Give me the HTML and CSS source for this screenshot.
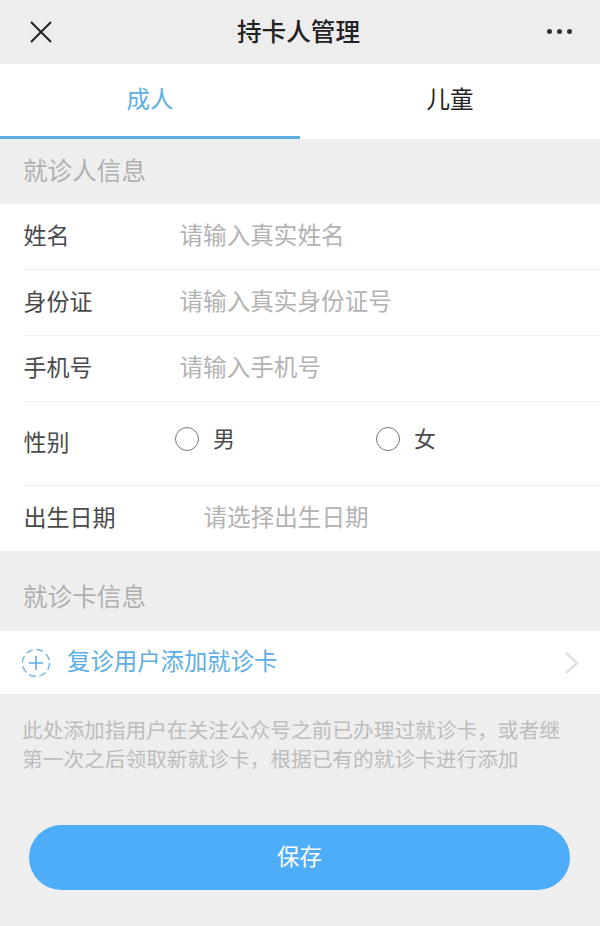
FILE: index.html
```html
<!DOCTYPE html>
<html lang="zh-CN">
<head>
    <meta charset="UTF-8">
    <meta name="viewport" content="width=device-width, initial-scale=1.0">
    <title>持卡人管理</title>

    <link rel="stylesheet" href="styles.css">
</head>
<body>

    <div class="header">
        <svg class="close" width="24" height="24" viewBox="0 0 24 24">
            <path d="M2 2 L22 22 M22 2 L2 22" fill="none" stroke="#222" stroke-width="2"/>
        </svg>
        <h1>持卡人管理</h1>
        <div class="more"><span></span><span></span><span></span></div>
    </div>

    <div class="tabs">
        <div class="tab active">成人</div>
        <div class="tab">儿童</div>
    </div>

    <div class="section">就诊人信息</div>

    <div class="form">
        <div class="row">
            <div class="label">姓名</div>
            <div class="hint">请输入真实姓名</div>
        </div>
        <div class="row">
            <div class="label">身份证</div>
            <div class="hint">请输入真实身份证号</div>
        </div>
        <div class="row">
            <div class="label">手机号</div>
            <div class="hint">请输入手机号</div>
        </div>
        <div class="row row-gender">
            <div class="label">性别</div>
            <div class="radios">
                <div class="radio"><i></i><span>男</span></div>
                <div class="radio"><i></i><span>女</span></div>
            </div>
        </div>
        <div class="row row-date">
            <div class="label">出生日期</div>
            <div class="hint">请选择出生日期</div>
        </div>
    </div>

    <div class="section section-card">就诊卡信息</div>

    <div class="add">
        <svg width="30" height="30" viewBox="0 0 30 30">
            <circle cx="15" cy="15" r="13.5" fill="none" stroke="#6fb6e6" stroke-width="1.4" stroke-dasharray="7 3.6"/>
            <path d="M8 15 H22 M15 8 V22" fill="none" stroke="#5eaee3" stroke-width="1.6"/>
        </svg>
        <span class="add-text">复诊用户添加就诊卡</span>
        <svg class="arrow" width="16" height="26" viewBox="0 0 16 26">
            <path d="M3 3 L14 13 L3 23" fill="none" stroke="#e0e0e0" stroke-width="2.4"/>
        </svg>
    </div>

    <p class="note">此处添加指用户在关注公众号之前已办理过就诊卡，或者继第一次之后领取新就诊卡，根据已有的就诊卡进行添加</p>

    <div class="save">保存</div>

</body>
</html>
```

FILE: styles.css
```css
body {
    margin: 0;
    height: 926px;
    overflow: hidden;
    background-color: #eeeeee;
    font-family: "Noto Sans CJK SC", "Noto Sans", sans-serif;
    color: #444;
}

.header {
    height: 64px;
    display: flex;
    align-items: center;
    justify-content: space-between;
    padding: 0 27px 0 29px;
    background-color: #ededed;
}

.header h1 {
    margin: 0 3px 4px 0;
    font-size: 24.6px;
    font-weight: 500;
    color: #222;
}

.close {
    margin-top: -1px;
}

.more {
    display: flex;
    gap: 5px;
    width: 26px;
    margin-bottom: 1px;
}

.more span {
    width: 5px;
    height: 5px;
    border-radius: 50%;
    background-color: #333;
}

.tabs {
    display: flex;
    height: 75px;
    background-color: white;
}

.tab {
    flex: 1;
    display: flex;
    align-items: center;
    justify-content: center;
    box-sizing: border-box;
    padding-bottom: 8px;
    font-size: 23.5px;
    color: #222;
}

.tab.active {
    color: #5eaee3;
    border-bottom: 3px solid #5eaee3;
    padding-bottom: 5px;
}

.section {
    height: 65px;
    box-sizing: border-box;
    display: flex;
    align-items: center;
    padding: 0 0 5px 23px;
    font-size: 24.6px;
    color: #b0b0b0;
}

.section-card {
    height: 80px;
    padding-top: 12px;
}

.form {
    background-color: white;
}

.row {
    height: 66px;
    box-sizing: border-box;
    margin-left: 24px;
    padding-bottom: 5px;
    display: flex;
    align-items: center;
    border-bottom: 1px solid #f1f1f1;
}

.label {
    width: 156px;
    font-size: 23px;
    margin-left: -0.5px;
    color: #4a4a4a;
}

.hint {
    font-size: 23.6px;
    color: #b2b2b2;
}

.row-gender {
    height: 84px;
}

.radios {
    display: flex;
    margin-top: -4px;
    margin-left: -4.5px;
}

.radio {
    width: 201px;
    display: flex;
    align-items: center;
    gap: 14px;
    font-size: 22px;
    color: #4a4a4a;
}

.radio span {
    margin-bottom: 5px;
}

.radio i {
    width: 22px;
    height: 22px;
    border: 1px solid #777;
    border-radius: 50%;
}

.row-date {
    height: 65px;
    border-bottom: none;
}

.row-date .label {
    width: 180px;
}

.add {
    height: 63px;
    display: flex;
    align-items: center;
    padding: 0 21px;
    background-color: white;
}

.add-text {
    flex: 1;
    margin: 0 0 5px 16px;
    font-size: 23.4px;
    color: #5eaee3;
}

.note {
    margin: 21px 0 0;
    padding: 0 22px;
    font-size: 20.7px;
    line-height: 29px;
    color: #bdbdbd;
}

.save {
    margin: 52px 30px 0 29px;
    height: 65px;
    box-sizing: border-box;
    padding-bottom: 5px;
    display: flex;
    align-items: center;
    justify-content: center;
    border-radius: 33px;
    background-color: #4eadf8;
    color: white;
    font-size: 22.5px;
}
```
